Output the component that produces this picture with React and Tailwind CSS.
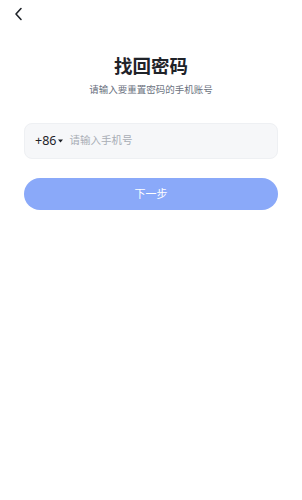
import React from "react";

const App = () => {
  return (
    <div
      className="w-[302px] h-[500px] bg-white flex flex-col"
      style={{ fontFamily: '"Noto Sans", "Noto Sans CJK SC", sans-serif' }}
    >
      <div className="h-[28px] pl-[13px] pt-[7px]">
        <svg width="12" height="14" viewBox="0 0 12 14" fill="none">
          <path d="M8 1.5L3 7l5 5.5" stroke="#1f2329" strokeWidth="1.6" strokeLinecap="round" strokeLinejoin="round" />
        </svg>
      </div>
      <div className="mt-[25px] flex flex-col items-center">
        <span className="text-[18.5px] leading-[26px] font-bold text-[#1f2329]">找回密码</span>
        <span className="mt-[4px] text-[9.5px] leading-[13px] text-[#6b7280]">请输入要重置密码的手机账号</span>
      </div>
      <div className="mx-[24px] mt-[27px] h-[36px] rounded-[8px] bg-[#f6f7f9] border border-[#eef0f3] flex items-center pl-[10px]">
        <span className="text-[12.5px] text-[#1f2329]">+86</span>
        <svg className="ml-[2px]" width="5" height="4" viewBox="0 0 5 4">
          <path d="M0 0.5h5L2.5 3.5z" fill="#1f2329" />
        </svg>
        <span className="ml-[6px] text-[10.5px] text-[#a8adb5]">请输入手机号</span>
      </div>
      <div className="mx-[24px] mt-[19px] h-[32px] rounded-full bg-[#8aa9f9] flex items-center justify-center">
        <span className="text-[11px] text-white">下一步</span>
      </div>
    </div>
  );
};

export default App;
